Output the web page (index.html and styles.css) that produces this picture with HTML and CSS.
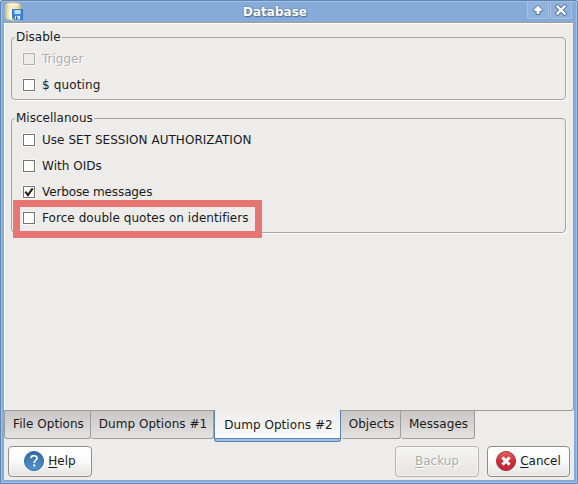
FILE: index.html
```html
<!DOCTYPE html>
<html lang="en">
<head>
<meta charset="utf-8">
<title>Database</title>
<link rel="stylesheet" href="styles.css">
</head>
<body>
<div class="window">
  <header class="titlebar">
    <svg class="app-icon" width="19" height="19" viewBox="0 0 19 19">
      <defs><linearGradient id="cyl"><stop offset="0" stop-color="#dcc874"/><stop offset=".35" stop-color="#fffef0"/><stop offset=".7" stop-color="#f6edc8"/><stop offset="1" stop-color="#d9c578"/></linearGradient></defs>
      <path d="M.6 3.200C.6-.2 15.400-.2 15.400 3.200V15.500C15.400 19 .6 19 .6 15.500Z" fill="url(#cyl)" stroke="#d3c48c"/>
      <ellipse cx="8" cy="3" rx="6.500" ry="2" fill="#f7f3dc" stroke="#d9ca8b" stroke-width=".7"/>
      <path d="M7.500 7.500H17.500V17.500H9L7.500 16V7.500Z" fill="#4689d4" stroke="#2f72c2"/>
      <path d="M9.500 8H15.500V12H9.500Z" fill="#c3dcf6"/>
      <path d="M10 14H15V17.500H10Z" fill="#e3edf7"/>
      <path d="M11 14.500H12.500V17.500H11Z" fill="#285f9f"/>
    </svg>
    <h1 class="title">Database</h1>
    <div class="controls">
      <span class="control"><svg width="12" height="12" viewBox="0 0 12 12"><path d="M6 1.200L10.600 5.800V7.200H7.900V10.500H4.100V7.200H1.400V5.800Z" fill="#fff" stroke="#54789f"/></svg></span>
      <span class="control"><svg width="12" height="12" viewBox="0 0 12 12"><path d="M2.500 2.500L9.500 9.500M9.500 2.500L2.500 9.500" stroke="#54789f" stroke-width="4.200" stroke-linecap="square"/><path d="M2.500 2.500L9.500 9.500M9.500 2.500L2.500 9.500" stroke="#fff" stroke-width="2.300" stroke-linecap="square"/></svg></span>
    </div>
  </header>
  <main class="body">
    <section class="page">
      <fieldset class="group">
        <legend>Disable</legend>
        <label class="option disabled"><span class="box"></span>Trigger</label>
        <label class="option wide"><span class="box"></span>$ quoting</label>
      </fieldset>
      <fieldset class="group misc">
        <legend>Miscellanous</legend>
        <label class="option caps"><span class="box"></span>Use SET SESSION AUTHORIZATION</label>
        <label class="option caps"><span class="box"></span>With OIDs</label>
        <label class="option tight"><span class="box"><svg width="10" height="10" viewBox="0 0 10 10"><path d="M1.300 4.700L3.900 8L8.700 1.400" fill="none" stroke="#1c1c1c" stroke-width="2"/></svg></span>Verbose messages</label>
        <label class="option marked"><span class="box"></span>Force double quotes on identifiers</label>
      </fieldset>
    </section>
    <nav class="tabs">
      <span class="tab file">File Options</span>
      <span class="tab dump1">Dump Options #1</span>
      <span class="tab dump2 active">Dump Options #2</span>
      <span class="tab objects">Objects</span>
      <span class="tab messages">Messages</span>
    </nav>
    <footer class="actions">
      <button class="button"><svg width="20" height="20" viewBox="0 0 20 20"><defs><linearGradient id="hb" x2="0" y2="1"><stop offset="0" stop-color="#3268a3"/><stop offset="1" stop-color="#5297d1"/></linearGradient></defs><circle cx="10" cy="10" r="9.500" fill="url(#hb)" stroke="#2f659e"/><path d="M7 7.200C7.200 3.800 13 4 13 7.200C13 9.300 10.200 9.200 10.200 12" fill="none" stroke="#fff" stroke-width="1.700"/><circle cx="10.200" cy="14.500" r="1.150" fill="#fff"/></svg><span><u>H</u>elp</span></button>
      <button class="button backup" disabled><span><u>B</u>ackup</span></button>
      <button class="button"><svg width="20" height="20" viewBox="0 0 20 20"><defs><linearGradient id="rb" x2="0" y2="1"><stop offset="0" stop-color="#e26560"/><stop offset=".5" stop-color="#d02d32"/><stop offset="1" stop-color="#bd263c"/></linearGradient></defs><circle cx="10" cy="10" r="9.500" fill="url(#rb)" stroke="#a72b3c"/><path d="M6.400 6.400L13.600 13.600M13.600 6.400L6.400 13.600" stroke="#fff" stroke-width="3"/></svg><span><u>C</u>ancel</span></button>
    </footer>
  </main>
</div>
</body>
</html>
```
FILE: styles.css
```css
*, *::after { box-sizing: border-box; }
body { margin: 0; overflow: hidden; font: 12px/16px "DejaVu Sans", sans-serif; color: #1a1a1a; }
.window { width: 578px; height: 484px; padding: 1px 3px 3px; background: #86abd9; border: 1px solid #5f85b2; box-shadow: inset 1px 1px #a3c0e4, inset -1px -1px #a3c0e4; display: flex; flex-direction: column; border-radius: 2px 2px 0 0; }
.titlebar { height: 20px; display: grid; grid-template-columns: 20px 1fr 48px; flex: none; }
.app-icon { margin-left: 1px; }
.title { margin: 0; padding-top: 2px; text-align: center; color: #fff; font-size: 12px; line-height: 16px; font-weight: bold; text-shadow: 1px 1px 1px #496f9e, 0 0 2px #496f9e; }
.controls { display: flex; gap: 1px; height: 17px; margin-left: 1px; }
.control { width: 22px; display: flex; align-items: center; justify-content: center; background: #8fb1dd; border: 1px solid #a3c0e5; border-top: 0; border-radius: 0 0 2px 2px; }
.control svg { display: block; }
.body { flex: 1; display: flex; flex-direction: column; background: #edeceb; border-top: 1px solid #a69e95; }
.page { height: 388px; border: solid #9d9c9a; border-width: 0 1px 1px 0; border-radius: 0 0 3px; box-shadow: inset 1px 1px #fff; padding: 6px 7px 0; }
.group { margin: 0; padding: 0 0 0 11px; min-width: 0; height: 71px; border: 1px solid #a5a4a1; border-radius: 4px; box-shadow: 1px 1px #fbfbfa; position: relative; }
.misc { height: 123px; margin-top: 10px; }
legend { margin-left: -8px; padding: 0 1px; height: 16px; line-height: 16px; }
.option { display: flex; align-items: center; height: 26px; gap: 7px; white-space: nowrap; letter-spacing: .06px; }
.group .option:nth-of-type(1) { margin-top: 1px; }
.caps { letter-spacing: .04px; }
.tight { letter-spacing: -.12px; }
.wide { letter-spacing: .15px; }
.box { width: 12px; height: 12px; flex: none; border: 1px solid #777571; background: #fff; box-shadow: 0 0 0 1px #f8f8f7; }
.box svg { display: block; }
.disabled { color: #afada9; text-shadow: 1px 1px #fff; letter-spacing: 0; }
.disabled .box { background: #edeceb; border-color: #b1afac; }
.marked { position: relative; }
.marked::after { content: ""; position: absolute; left: -10px; top: -5px; width: 249px; height: 38px; border: 7px solid #e77572; border-radius: 1px; }
.tabs { display: flex; height: 35px; align-items: flex-start; }
.tab { height: 28px; border: solid #9d9c99; border-width: 0 1px 1px 0; border-radius: 0 0 3px 3px; background: linear-gradient(#c8c7c5, #e3e2e1); text-align: center; line-height: 26px; white-space: nowrap; padding-left: 2px; letter-spacing: .05px; }
.file { width: 87px; border-left-width: 1px; }
.dump1 { width: 123px; }
.active { width: 127px; height: 32px; margin-top: -1px; position: relative; line-height: 30px; border: 1px solid #5d83b1; border-top: 0; background: linear-gradient(#edeceb, #fafafa 28px, #5d83b1 28px, #5d83b1 29px, #9fc0e8 29px); }
.objects { width: 60px; }
.messages { width: 74px; }
.actions { display: flex; gap: 8px; padding: 0 4px; }
.button { height: 31px; width: 84px; padding: 0; border: 1px solid #8f8d89; border-radius: 4px; background: linear-gradient(#fff, #fbfbfb 45%, #e5e4e3); box-shadow: inset 0 0 0 1px #fff8; display: flex; justify-content: center; align-items: center; gap: 4px; font: inherit; color: #1a1a1a; }
.button:last-child { width: 83px; }
.button svg { flex: none; margin-top: -1px; }
.button span { margin-top: -2px; }
.button u { text-underline-offset: 2px; }
.button.backup { margin-left: auto; color: #afada9; text-shadow: 1px 1px #fff; border-color: #b5b3b0; background: linear-gradient(#f4f4f3, #e5e4e3); }
```
